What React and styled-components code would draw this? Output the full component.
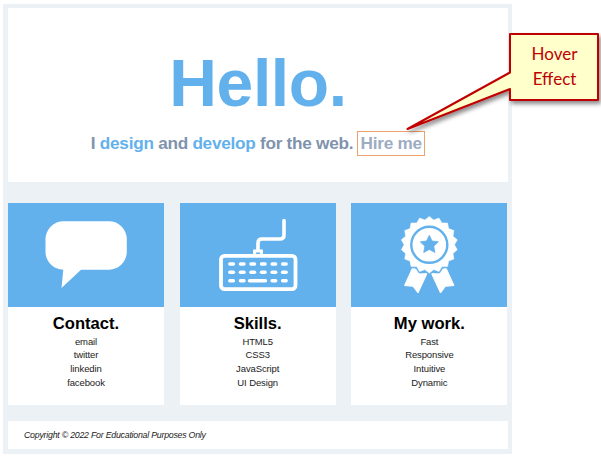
import React from "react";
import styled, { createGlobalStyle } from "styled-components";

const GlobalStyle = createGlobalStyle`
  body {
    margin: 0;
    background: #fff;
    font-family: "Liberation Sans", Arial, sans-serif;
    overflow: hidden;
  }
`;

const Stage = styled.div`
  position: relative;
  box-sizing: border-box;
  width: 601px;
  height: 457px;
  padding: 4px 0 0 3px;
`;

const Page = styled.div`
  box-sizing: border-box;
  display: flex;
  flex-direction: column;
  width: 509px;
  height: 450px;
  padding: 4px 4px 5px 5px;
  background: #ecf1f6;
`;

const Hero = styled.header`
  box-sizing: border-box;
  height: 174px;
  padding-top: 38px;
  background: #fff;
  text-align: center;
`;

const Title = styled.h1`
  margin: 0;
  font-size: 66px;
  letter-spacing: -0.4px;
  line-height: 74px;
  color: #63b1ec;
`;

const Tagline = styled.p`
  display: flex;
  align-items: flex-start;
  justify-content: center;
  gap: 4px;
  margin: 11px 0 0;
  font-size: 17.2px;
  font-weight: bold;
  letter-spacing: -0.27px;
  line-height: 25px;
  color: #8093ad;
  white-space: nowrap;
`;

const Accent = styled.span`
  color: #63b1ec;
`;

const HireLink = styled.a`
  box-sizing: border-box;
  width: 68px;
  height: 25px;
  border: 1px solid #eda16e;
  line-height: 23px;
  color: #9dacc1;
`;

const Cards = styled.main`
  display: grid;
  grid-template-columns: repeat(3, 156px);
  justify-content: space-between;
  width: 499.4px;
  margin: 21px 0 16px;
  height: 202px;
`;

const Card = styled.section`
  background: #fff;
  text-align: center;
`;

const Banner = styled.div`
  height: 103.5px;
  background: #63b1ec;

  svg {
    display: block;
  }
`;

const CardTitle = styled.h2`
  margin: 7px 0 1.2px;
  font-size: 16.6px;
  line-height: 20px;
  color: #000;
`;

const List = styled.ul`
  margin: 0;
  padding: 0;
  list-style: none;
  font-size: 9.5px;
  letter-spacing: -0.12px;
  line-height: 13.67px;
  color: #222;
`;

const Footer = styled.footer`
  height: 28px;
  padding-left: 16px;
  background: #fff;
  font-size: 8.8px;
  font-style: italic;
  letter-spacing: -0.24px;
  line-height: 28px;
  color: #222;
`;

const Callout = styled.aside`
  position: absolute;
  left: 400px;
  top: 25px;
  width: 201px;
  height: 115px;

  svg {
    display: block;
  }
`;

const CalloutText = styled.div`
  position: absolute;
  left: 110px;
  top: 16px;
  width: 89px;
  font-family: Lato, sans-serif;
  font-size: 17px;
  line-height: 25px;
  text-align: center;
  color: #c00000;
`;

const SpeechIcon = () => (
  <svg width="156" height="104" viewBox="0 0 156 104" fill="#fff">
    <path d="M55.5 18.2H101A18 18 0 0 1 118.8 36V49A18 18 0 0 1 101 66.7H73L53.5 85L55.3 66.7A18 18 0 0 1 37.5 49V36A18 18 0 0 1 55.5 18.2Z" />
  </svg>
);

const KEY_ROWS = [61, 69.3];
const KEY_COLUMNS = [49.8, 60.4, 70.9, 81.5, 92.1, 102.6];

const KeyboardIcon = () => (
  <svg width="156" height="104" viewBox="0 0 156 104" fill="none" stroke="#fff" strokeWidth="3.4" strokeLinecap="round">
    <rect x="41" y="52.8" width="74.5" height="33.3" rx="3.5" strokeWidth="3.8" />
    <path d="M104 17.5V32Q104 36 100 36H82Q78 36 78 40V47" strokeWidth="3.6" />
    <path d="M74.5 51V48H81.5V51" strokeWidth="2.8" strokeLinecap="butt" />
    {KEY_ROWS.map((y) =>
      KEY_COLUMNS.map((x) => <path key={`${x}-${y}`} d={`M${x} ${y}h3.6`} />)
    )}
    <path d="M49.8 77.8h3.6M60.4 77.8h3.6M69.5 77.8h16M92.1 77.8h3.6M102.6 77.8h3.6" />
  </svg>
);

const BADGE_POINTS = Array.from({ length: 36 }, (_, i) => {
  const radius = i % 2 ? 25.2 : 28.4;
  const angle = (i * Math.PI) / 18 - Math.PI / 2;
  return `${78.3 + radius * Math.cos(angle)},${41.8 + radius * Math.sin(angle)}`;
}).join(" ");

const STAR_POINTS = Array.from({ length: 10 }, (_, i) => {
  const radius = i % 2 ? 4.7 : 9.5;
  const angle = (i * Math.PI) / 5 - Math.PI / 2;
  return `${78.3 + radius * Math.cos(angle)},${41.8 + radius * Math.sin(angle)}`;
}).join(" ");

const AwardIcon = () => (
  <svg width="156" height="104" viewBox="0 0 156 104" fill="#fff" strokeLinejoin="round">
    <path d="M61.5 65L67 67L69 71L76 70.5L67 90L62 83.3L53.5 82.5Z" stroke="#fff" />
    <path d="M95 65L89.5 67L87.5 71L80.5 70.5L89.5 90L94.5 83.3L103 82.5Z" stroke="#fff" />
    <polygon points={BADGE_POINTS} stroke="#63b1ec" strokeWidth="3.4" />
    <polygon points={BADGE_POINTS} stroke="#fff" strokeWidth="0.5" />
    <circle cx="78.3" cy="41.8" r="18" fill="none" stroke="#63b1ec" strokeWidth="2.4" />
    <polygon points={STAR_POINTS} fill="#63b1ec" stroke="#63b1ec" strokeWidth="0.8" />
  </svg>
);

const CARDS = [
  { title: "Contact.", Icon: SpeechIcon, items: ["email", "twitter", "linkedin", "facebook"] },
  { title: "Skills.", Icon: KeyboardIcon, items: ["HTML5", "CSS3", "JavaScript", "UI Design"] },
  { title: "My work.", Icon: AwardIcon, items: ["Fast", "Responsive", "Intuitive", "Dynamic"] },
];

export default function App() {
  return (
    <Stage>
      <GlobalStyle />
      <Page>
        <Hero>
          <Title>Hello.</Title>
          <Tagline>
            <span>
              I <Accent>design</Accent> and <Accent>develop</Accent> for the web.
            </span>
            <HireLink>Hire me</HireLink>
          </Tagline>
        </Hero>
        <Cards>
          {CARDS.map(({ title, Icon, items }) => (
            <Card key={title}>
              <Banner>
                <Icon />
              </Banner>
              <CardTitle>{title}</CardTitle>
              <List>
                {items.map((item) => (
                  <li key={item}>{item}</li>
                ))}
              </List>
            </Card>
          ))}
        </Cards>
        <Footer>Copyright © 2022 For Educational Purposes Only</Footer>
      </Page>
      <Callout>
        <svg width="201" height="115" viewBox="0 0 201 115">
          <defs>
            <filter id="calloutShadow" x="-10%" y="-10%" width="125%" height="130%">
              <feDropShadow dx="2" dy="3" stdDeviation="2" floodColor="#000" floodOpacity="0.45" />
            </filter>
          </defs>
          <path
            d="M110 9H198V75H110V64L7.5 104L110 47.5Z"
            fill="#ffffcc"
            stroke="#c00000"
            strokeWidth="2"
            strokeLinejoin="round"
            filter="url(#calloutShadow)"
          />
        </svg>
        <CalloutText>
          Hover
          <br />
          Effect
        </CalloutText>
      </Callout>
    </Stage>
  );
}
